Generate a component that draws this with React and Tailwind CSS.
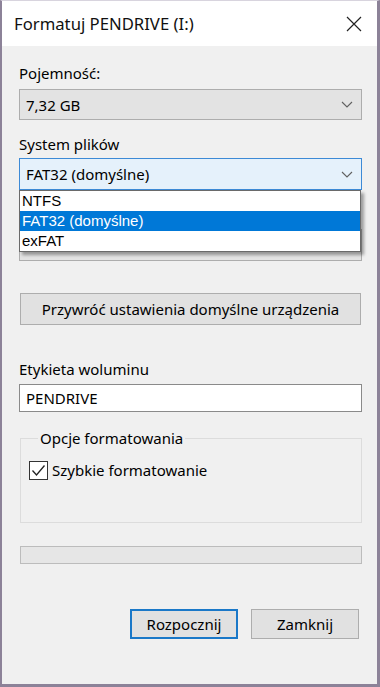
import React from "react";

function Chevron() {
  return (
    <svg width="12" height="7" viewBox="0 0 12 7" className="shrink-0">
      <path d="M1 1 L6 6 L11 1" fill="none" stroke="#606060" strokeWidth="1.1" />
    </svg>
  );
}

export default function App() {
  return (
    <div className="w-[380px] h-[687px] bg-[#f0f0f0] border-l-2 border-r-[3px] border-b-[3px] border-t border-[#8c8298] border-t-[#d8d4de] flex flex-col text-black font-['Noto_Sans','Open_Sans',sans-serif]">
      {/* Title bar */}
      <div className="h-[45px] bg-white flex items-center justify-between pl-[12px] pr-[15px] shrink-0">
        <span className="text-[16.7px] text-[#111]">Formatuj PENDRIVE (I:)</span>
        <svg width="16" height="16" viewBox="0 0 16 16">
          <path d="M1 1 L15 15 M15 1 L1 15" stroke="#222" strokeWidth="1.2" fill="none" />
        </svg>
      </div>

      <div className="flex flex-col pl-[17px] pr-[15px] text-[15px] leading-[20px]">
        <div className="mt-[17px] h-[20px]">Pojemność:</div>
        <div className="mt-[6px] h-[31px] bg-[#e3e3e3] border border-[#adadad] flex items-center justify-between pl-[6px] pr-[8px]">
          <span>7,32 GB</span>
          <Chevron />
        </div>

        <div className="mt-[14px] h-[20px]">System plików</div>
        <div className="relative mt-[4px]">
          <div className="h-[32px] bg-[#e5f1fb] border border-[#3d8ad6] flex items-center justify-between pl-[6px] pr-[8px]">
            <span>FAT32 (domyślne)</span>
            <Chevron />
          </div>
          <div className="absolute left-0 top-[32px] w-[342px] h-[62px] bg-white border border-[#6a6a6a] shadow-[3px_3px_3px_rgba(0,0,0,0.35)] z-10 flex flex-col font-['Liberation_Sans',sans-serif] text-[15px] leading-[20px]">
            <div className="h-[20px] pl-[2px]">NTFS</div>
            <div className="h-[20px] pl-[2px] bg-[#0078d7] text-white">FAT32 (domyślne)</div>
            <div className="h-[20px] pl-[2px]">exFAT</div>
          </div>
        </div>

        {/* hidden allocation unit label (covered by open list) */}
        <div className="mt-[9px] h-[20px]" />
        <div className="mt-[10px] h-[32px] bg-[#e3e3e3] border border-[#adadad]" />

        <div className="mt-[32px] h-[32px] ml-[1px] mr-[1px] bg-[#e1e1e1] border border-[#adadad] flex items-center justify-center">
          Przywróć ustawienia domyślne urządzenia
        </div>

        <div className="mt-[34px] h-[20px]">Etykieta woluminu</div>
        <div className="mt-[5px] h-[28px] bg-white border border-[#8a8a8a] flex items-center pl-[6px]">
          PENDRIVE
        </div>

        <fieldset className="mt-[16px] h-[95px] border border-[#dcdcdc] pl-[8px] ml-[1px]">
          <legend className="ml-[9px] px-[2px] h-[20px]">Opcje formatowania</legend>
          <div className="mt-[12px] flex items-center gap-[4px]">
            <div className="w-[19px] h-[19px] border border-[#333] bg-white flex items-center justify-center">
              <svg width="15" height="13" viewBox="0 0 15 13">
                <path d="M1.5 6.5 L5.5 11 L13.5 1.5" fill="none" stroke="#222" strokeWidth="1.3" />
              </svg>
            </div>
            <span>Szybkie formatowanie</span>
          </div>
        </fieldset>

        <div className="mt-[23px] h-[18px] ml-[1px] bg-[#e6e6e6] border border-[#bcbcbc]" />

        <div className="mt-[45px] flex justify-end gap-[13px] pr-[3px]">
          <div className="w-[108px] h-[30px] bg-[#e1e1e1] border-2 border-[#1a78c8] flex items-center justify-center">
            Rozpocznij
          </div>
          <div className="w-[108px] h-[30px] bg-[#e1e1e1] border border-[#adadad] flex items-center justify-center">
            Zamknij
          </div>
        </div>
      </div>
    </div>
  );
}
